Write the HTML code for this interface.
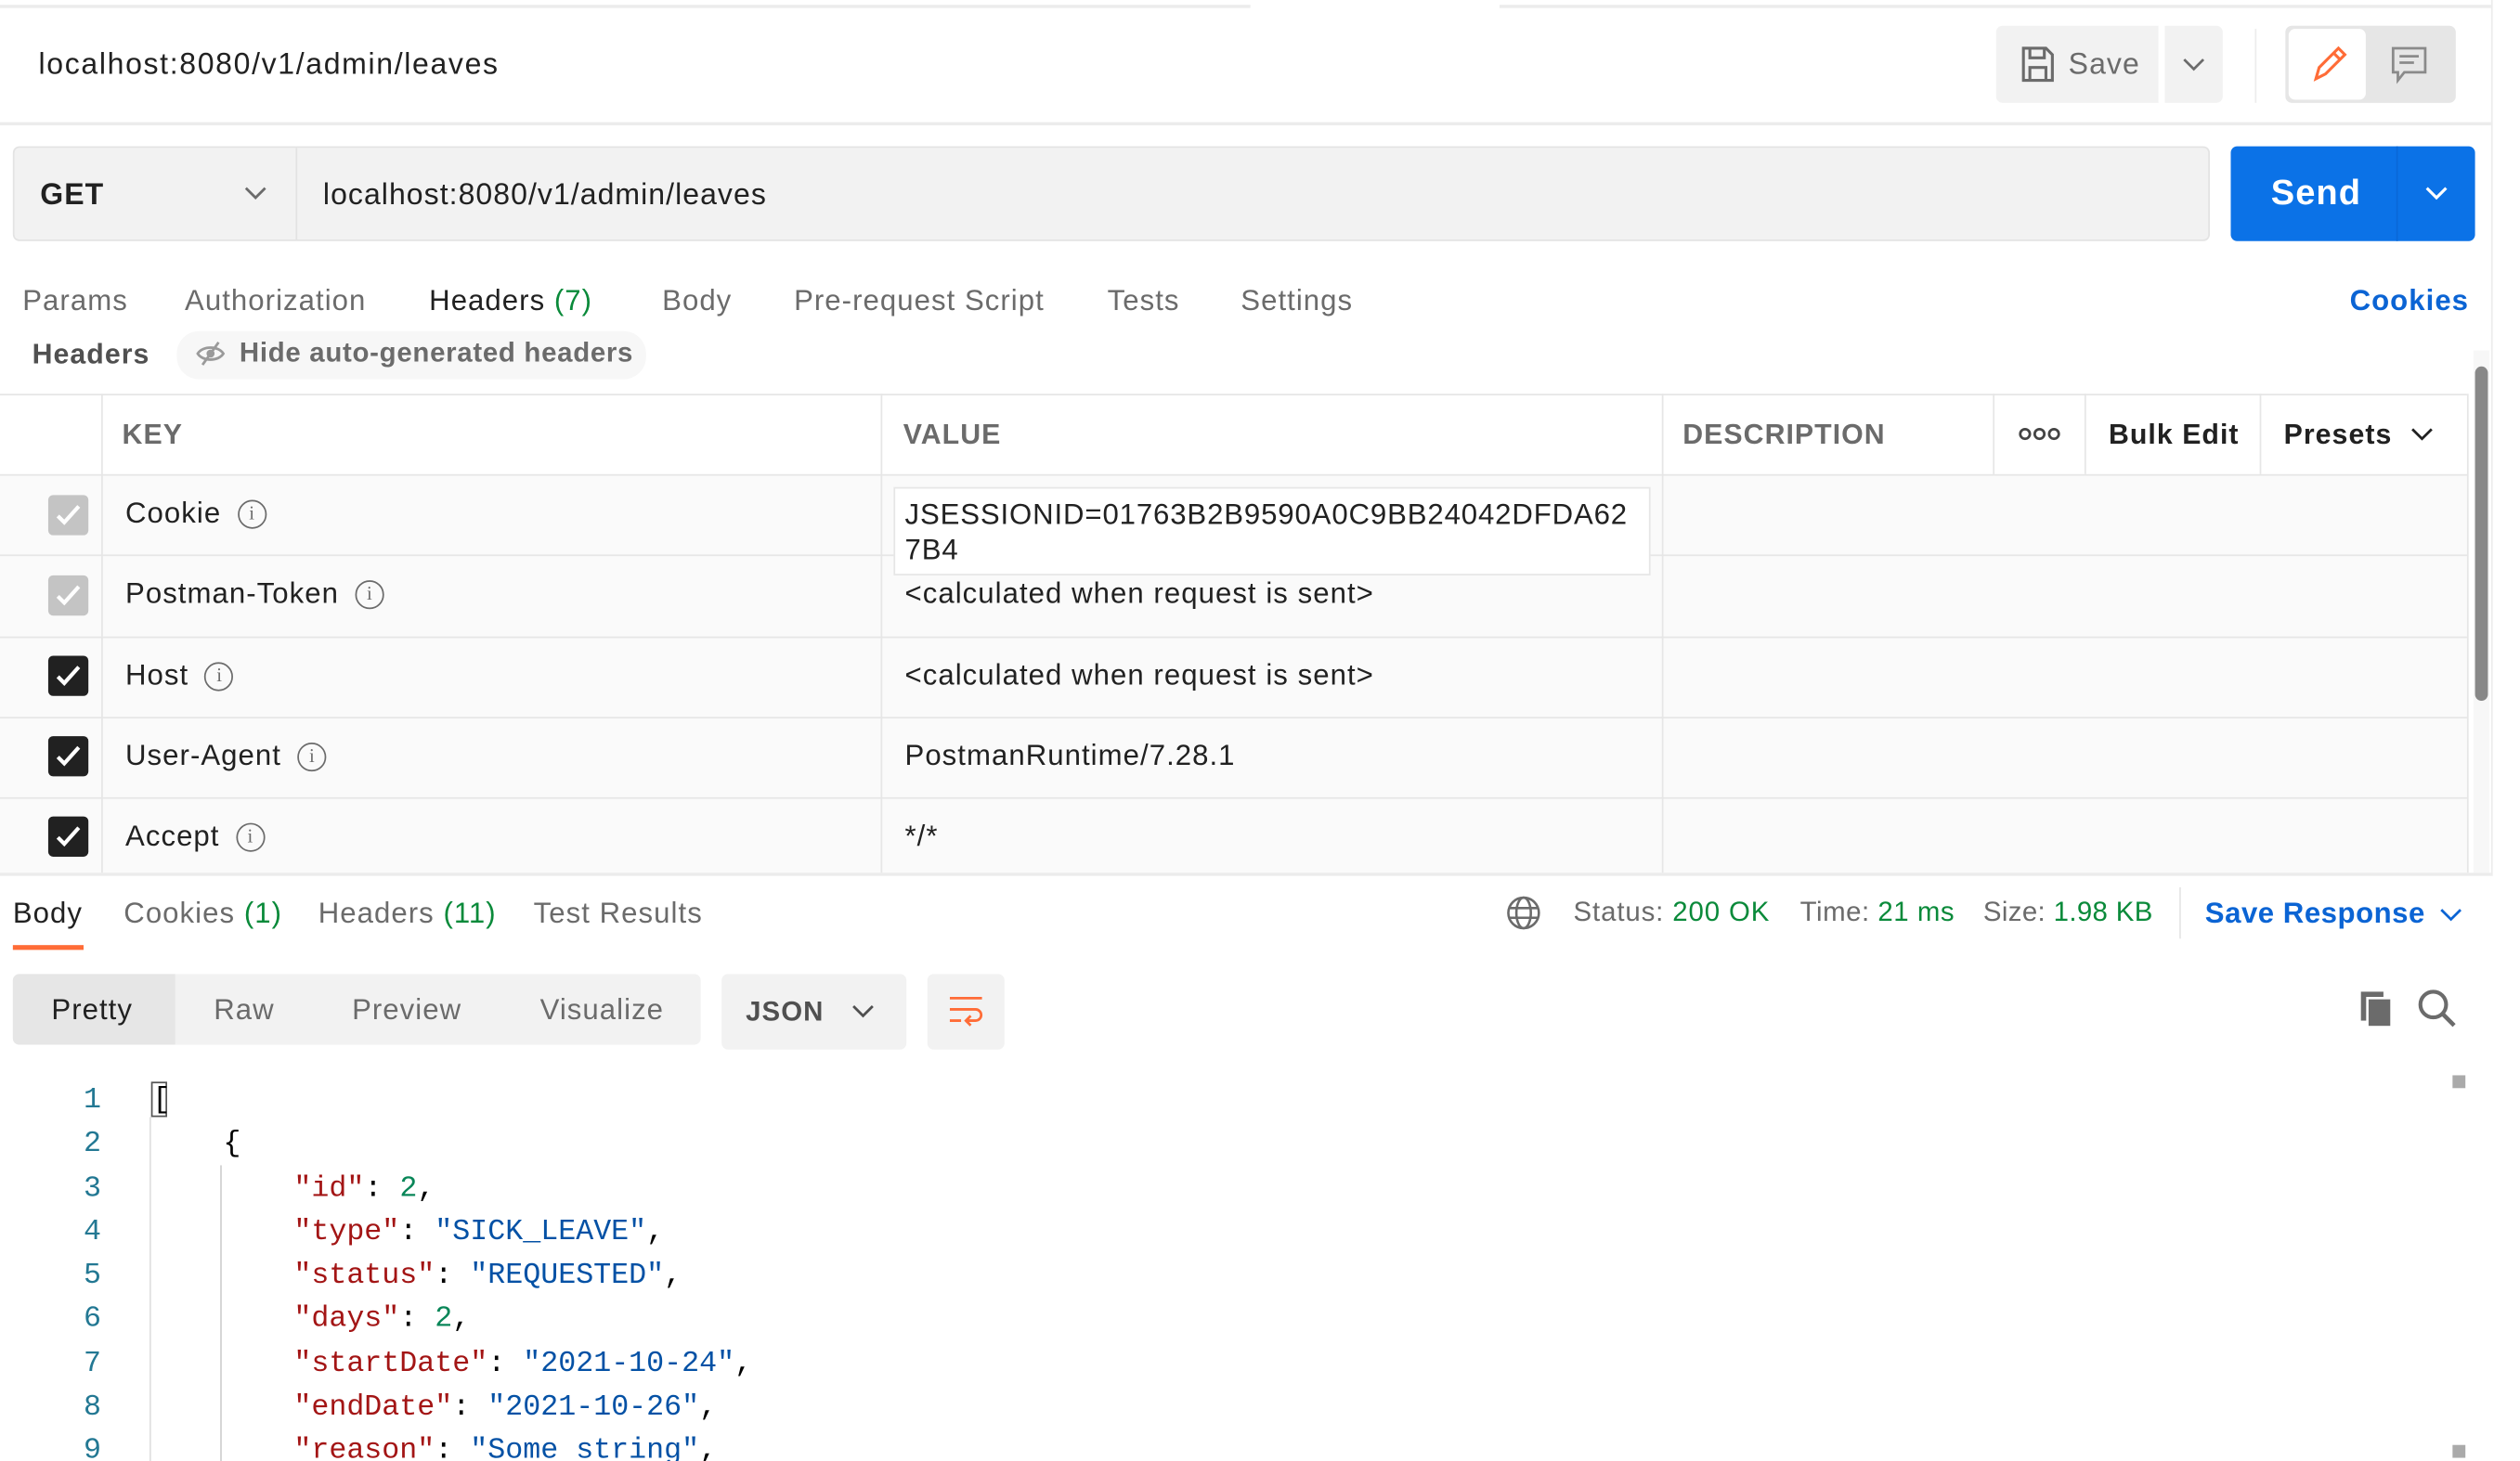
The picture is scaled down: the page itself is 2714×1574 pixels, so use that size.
<!DOCTYPE html>
<html><head><meta charset="utf-8"><style>
*{box-sizing:border-box;margin:0;padding:0}
html,body{width:2714px;height:1574px;overflow:hidden;background:#fff}
#w{width:1568px;height:909px;transform:scale(1.7309,1.7316);transform-origin:0 0;position:relative;font-family:"Liberation Sans",sans-serif;color:#212121}
.a{position:absolute}
.t{font-size:18px;white-space:nowrap;letter-spacing:0.6px}
.g{color:#6b6b6b}
.mono{font-family:"Liberation Mono",monospace;font-size:18.3px;white-space:pre}
.k{color:#a31515}.s{color:#0451a5}.n{color:#098658}
.hl{position:absolute;height:1px;background:#e6e6e6}
.vl{position:absolute;width:1px;background:#e6e6e6}
.cb{position:absolute;left:30px;width:25px;height:25px;border-radius:3px}
.cb.on{background:#212121}.cb.off{background:#c4c4c4}
.cb svg{position:absolute;left:3px;top:3px}
.info{display:inline-block;width:18px;height:18px;border:1.5px solid #6b6b6b;border-radius:50%;font-size:12px;text-align:center;line-height:15px;color:#6b6b6b;margin-left:10px;vertical-align:2px;font-family:"Liberation Serif",serif;letter-spacing:0}
</style></head><body><div id="w">
<div class="hl" style="left:0;top:3px;width:778px;background:#ececec;height:2px"></div>
<div class="hl" style="left:933px;top:3px;width:617px;background:#ececec;height:2px"></div>
<div class="vl" style="left:1550px;top:0;height:545px;background:#ececec"></div>
<div class="a t" style="left:24px;top:29px;font-size:18.5px;color:#212121;letter-spacing:0.95px">localhost:8080/v1/admin/leaves</div>
<div class="a" style="left:1242px;top:16px;width:101px;height:48px;background:#f2f2f2;border-radius:4px 0 0 4px"></div>
<svg class="a" style="left:1257px;top:28px" width="22" height="24" viewBox="0 0 22 24"><path d="M2 2h14l4 4v16H2z M6 2v6h9V2 M6 22v-8h10v8" fill="none" stroke="#6b6b6b" stroke-width="1.8"/></svg>
<div class="a t" style="left:1287px;top:29px;color:#6b6b6b;font-size:18.5px">Save</div>
<div class="a" style="left:1347px;top:16px;width:36px;height:48px;background:#f2f2f2;border-radius:0 4px 4px 0"></div>
<svg class="a" style="left:1357px;top:35px" width="16" height="10"><path d="M2 2l6 6 6-6" fill="none" stroke="#6b6b6b" stroke-width="1.6"/></svg>
<div class="vl" style="left:1403px;top:18px;height:46px;background:#ececec"></div>
<div class="a" style="left:1422px;top:16px;width:106px;height:48px;background:#e6e6e6;border-radius:4px"></div>
<div class="a" style="left:1424px;top:18px;width:48px;height:44px;background:#fff;border-radius:4px"></div>
<svg class="a" style="left:1437px;top:27px" width="24" height="26"><path d="M4 22l2-7L18 3l4 4L10 19z M15 6l4 4" fill="none" stroke="#ff6c37" stroke-width="1.8"/></svg>
<svg class="a" style="left:1487px;top:28px" width="24" height="26"><path d="M2 2h20v15H9l-4 5v-5H2z M6 7h12 M6 11h9" fill="none" stroke="#8a8a8a" stroke-width="1.6"/></svg>
<div class="hl" style="left:0;top:76px;width:1550px;height:2px;background:#ececec"></div>
<div class="a" style="left:8px;top:91px;width:1367px;height:59px;background:#f2f2f2;border:1px solid #e3e3e3;border-radius:4px"></div>
<div class="vl" style="left:184px;top:92px;height:57px;background:#e3e3e3"></div>
<div class="a t" style="left:25px;top:110px;font-weight:bold;font-size:18.5px">GET</div>
<svg class="a" style="left:151px;top:115px" width="16" height="10"><path d="M2 2l6 6 6-6" fill="none" stroke="#6b6b6b" stroke-width="1.6"/></svg>
<div class="a t" style="left:201px;top:110px;font-size:18.5px">localhost:8080/v1/admin/leaves</div>
<div class="a" style="left:1388px;top:91px;width:152px;height:59px;background:#0b72e7;border-radius:4px"></div>
<div class="vl" style="left:1491px;top:91px;height:59px;background:#0a68d8"></div>
<div class="a t" style="left:1413px;top:107px;color:#fff;font-weight:bold;font-size:22px">Send</div>
<svg class="a" style="left:1508px;top:115px" width="16" height="10"><path d="M2 2l6 6 6-6" fill="none" stroke="#fff" stroke-width="1.8"/></svg>
<div class="a t g" style="left:14px;top:177px">Params</div>
<div class="a t g" style="left:115px;top:177px">Authorization</div>
<div class="a t" style="left:267px;top:177px">Headers <span style="color:#0a8a3a">(7)</span></div>
<div class="a" style="left:267px;top:207px;width:109px;height:3px;background:#ff6c37"></div>
<div class="a t g" style="left:412px;top:177px">Body</div>
<div class="a t g" style="left:494px;top:177px">Pre-request Script</div>
<div class="a t g" style="left:689px;top:177px">Tests</div>
<div class="a t g" style="left:772px;top:177px">Settings</div>
<div class="a t" style="left:1462px;top:177px;color:#0b64d4;font-weight:bold">Cookies</div>
<div class="a t" style="left:20px;top:210px;color:#505050;font-weight:bold;font-size:17.5px">Headers</div>
<div class="a" style="left:110px;top:206px;width:292px;height:30px;background:#f7f7f7;border-radius:14px"></div>
<svg class="a" style="left:121px;top:211px" width="20" height="18"><path d="M2 9c3-5 13-5 16 0c-3 5-13 5-16 0z M5 16L15 2" fill="none" stroke="#9a9a9a" stroke-width="1.6"/><circle cx="10" cy="9" r="2.5" fill="#9a9a9a"/></svg>
<div class="a t" style="left:149px;top:210px;color:#6b6b6b;font-weight:bold;font-size:17px;letter-spacing:0.4px">Hide auto-generated headers</div>
<div class="a" style="left:1539px;top:218px;width:10px;height:325px;background:#f7f7f7"></div>
<div class="a" style="left:1540px;top:228px;width:8px;height:208px;background:#888;border-radius:4px"></div>
<div class="a" style="left:0;top:245px;width:1535px;height:298px;background:#fafafa"></div>
<div class="a" style="left:0;top:245px;width:1535px;height:50px;background:#fff"></div>
<div class="hl" style="left:0;top:245px;width:1535px"></div>
<div class="hl" style="left:0;top:295px;width:1535px"></div>
<div class="hl" style="left:0;top:345px;width:1535px"></div>
<div class="hl" style="left:0;top:396px;width:1535px"></div>
<div class="hl" style="left:0;top:446px;width:1535px"></div>
<div class="hl" style="left:0;top:496px;width:1535px"></div>
<div class="vl" style="left:63px;top:245px;height:298px"></div>
<div class="vl" style="left:548px;top:245px;height:298px"></div>
<div class="vl" style="left:1034px;top:245px;height:298px"></div>
<div class="vl" style="left:1240px;top:245px;height:50px"></div>
<div class="vl" style="left:1297px;top:245px;height:50px"></div>
<div class="vl" style="left:1406px;top:245px;height:50px"></div>
<div class="vl" style="left:1535px;top:245px;height:298px"></div>
<div class="a t g" style="left:76px;top:260px;font-weight:bold;font-size:17.5px">KEY</div>
<div class="a t g" style="left:562px;top:260px;font-weight:bold;font-size:17.5px">VALUE</div>
<div class="a t g" style="left:1047px;top:260px;font-weight:bold;font-size:17.5px">DESCRIPTION</div>
<svg class="a" style="left:1256px;top:265px" width="26" height="10"><circle cx="4" cy="5" r="3" fill="none" stroke="#444" stroke-width="1.6"/><circle cx="13" cy="5" r="3" fill="none" stroke="#444" stroke-width="1.6"/><circle cx="22" cy="5" r="3" fill="none" stroke="#444" stroke-width="1.6"/></svg>
<div class="a t" style="left:1312px;top:260px;font-weight:bold;font-size:17.5px;color:#212121">Bulk Edit</div>
<div class="a t" style="left:1421px;top:260px;font-weight:bold;font-size:17.5px;color:#212121">Presets</div>
<svg class="a" style="left:1499px;top:265px" width="16" height="10"><path d="M2 2l6 6 6-6" fill="none" stroke="#212121" stroke-width="1.6"/></svg>
<div class="cb off" style="top:308px"><svg width="19" height="19"><path d="M3 10l4 4 9-10" fill="none" stroke="#fff" stroke-width="2.4"/></svg></div>
<div class="cb off" style="top:358px"><svg width="19" height="19"><path d="M3 10l4 4 9-10" fill="none" stroke="#fff" stroke-width="2.4"/></svg></div>
<div class="cb on" style="top:408px"><svg width="19" height="19"><path d="M3 10l4 4 9-10" fill="none" stroke="#fff" stroke-width="2.4"/></svg></div>
<div class="cb on" style="top:458px"><svg width="19" height="19"><path d="M3 10l4 4 9-10" fill="none" stroke="#fff" stroke-width="2.4"/></svg></div>
<div class="cb on" style="top:508px"><svg width="19" height="19"><path d="M3 10l4 4 9-10" fill="none" stroke="#fff" stroke-width="2.4"/></svg></div>
<div class="a t" style="left:78px;top:309px">Cookie<span class="info">i</span></div>
<div class="a t" style="left:78px;top:359px">Postman-Token<span class="info">i</span></div>
<div class="a t" style="left:78px;top:410px">Host<span class="info">i</span></div>
<div class="a t" style="left:78px;top:460px">User-Agent<span class="info">i</span></div>
<div class="a t" style="left:78px;top:510px">Accept<span class="info">i</span></div>
<div class="a" style="left:556px;top:303px;width:471px;height:55px;background:#fff;border:1px solid #e6e6e6"></div>
<div class="a t" style="left:563px;top:309px;line-height:22px;letter-spacing:0.5px">JSESSIONID=01763B2B9590A0C9BB24042DFDA62<br>7B4</div>
<div class="a t" style="left:563px;top:359px">&lt;calculated when request is sent&gt;</div>
<div class="a t" style="left:563px;top:410px">&lt;calculated when request is sent&gt;</div>
<div class="a t" style="left:563px;top:460px">PostmanRuntime/7.28.1</div>
<div class="a t" style="left:563px;top:510px">*/*</div>
<div class="hl" style="left:0;top:543px;width:1550px;height:2px;background:#ececec"></div>
<div class="a t" style="left:8px;top:558px">Body</div>
<div class="a" style="left:8px;top:588px;width:44px;height:3px;background:#ff6c37"></div>
<div class="a t g" style="left:77px;top:558px">Cookies <span style="color:#0a8a3a">(1)</span></div>
<div class="a t g" style="left:198px;top:558px">Headers <span style="color:#0a8a3a">(11)</span></div>
<div class="a t g" style="left:332px;top:558px">Test Results</div>
<svg class="a" style="left:937px;top:557px" width="22" height="22"><circle cx="11" cy="11" r="9.5" fill="none" stroke="#6b6b6b" stroke-width="1.5"/><ellipse cx="11" cy="11" rx="4.5" ry="9.5" fill="none" stroke="#6b6b6b" stroke-width="1.5"/><path d="M2 8h18M2 14h18" stroke="#6b6b6b" stroke-width="1.5"/></svg>
<div class="a t g" style="left:979px;top:558px;font-size:17px;letter-spacing:0.5px">Status: <span style="color:#0a8a3a">200 OK</span></div>
<div class="a t g" style="left:1120px;top:558px;font-size:17px;letter-spacing:0.3px">Time: <span style="color:#0a8a3a">21 ms</span></div>
<div class="a t g" style="left:1234px;top:558px;font-size:17px;letter-spacing:0.2px">Size: <span style="color:#0a8a3a">1.98 KB</span></div>
<div class="vl" style="left:1356px;top:552px;height:32px;background:#e6e6e6"></div>
<div class="a t" style="left:1372px;top:558px;color:#0b64d4;font-weight:bold;letter-spacing:0.3px">Save Response</div>
<svg class="a" style="left:1517px;top:564px" width="16" height="10"><path d="M2 2l6 6 6-6" fill="none" stroke="#0b64d4" stroke-width="1.6"/></svg>
<div class="a" style="left:8px;top:606px;width:428px;height:44px;background:#f2f2f2;border-radius:4px"></div>
<div class="a" style="left:8px;top:606px;width:101px;height:44px;background:#e6e6e6;border-radius:4px 0 0 4px"></div>
<div class="a t" style="left:32px;top:618px">Pretty</div>
<div class="a t g" style="left:133px;top:618px">Raw</div>
<div class="a t g" style="left:219px;top:618px">Preview</div>
<div class="a t g" style="left:336px;top:618px">Visualize</div>
<div class="a" style="left:449px;top:606px;width:115px;height:47px;background:#f2f2f2;border-radius:4px"></div>
<div class="a t" style="left:464px;top:620px;color:#505050;font-weight:bold;font-size:17px">JSON</div>
<svg class="a" style="left:529px;top:624px" width="16" height="10"><path d="M2 2l6 6 6-6" fill="none" stroke="#505050" stroke-width="1.6"/></svg>
<div class="a" style="left:577px;top:606px;width:48px;height:47px;background:#f2f2f2;border-radius:4px"></div>
<svg class="a" style="left:589px;top:618px" width="24" height="22"><path d="M2 3h20M2 10h16a3.5 3.5 0 0 1 0 7h-5m2-3l-3 3 3 3M2 17h7" fill="none" stroke="#ff6c37" stroke-width="1.6"/></svg>
<svg class="a" style="left:1467px;top:615px" width="26" height="24"><rect x="2" y="2" width="14" height="18" fill="#6b6b6b"/><rect x="6" y="6" width="15" height="18" fill="#6b6b6b" stroke="#fff" stroke-width="1.5"/></svg>
<svg class="a" style="left:1504px;top:615px" width="26" height="26"><circle cx="10" cy="10" r="8" fill="none" stroke="#6b6b6b" stroke-width="2.4"/><path d="M16 16l7 7" stroke="#6b6b6b" stroke-width="2.6"/></svg>
<div class="a mono" style="left:20px;top:672px;width:43px;text-align:right;color:#237893;line-height:27.3px">1
2
3
4
5
6
7
8
9</div>
<div class="a" style="left:94px;top:673px;width:10px;height:22px;border:1px solid #555"></div>
<div class="vl" style="left:137px;top:725px;height:184px;background:#d0d0d0"></div>
<div class="vl" style="left:93px;top:695px;height:214px;background:#e0e0e0"></div>
<div class="a mono" style="left:95px;top:672px;line-height:27.3px;color:#000">[
    {
        <span class="k">"id"</span>: <span class="n">2</span>,
        <span class="k">"type"</span>: <span class="s">"SICK_LEAVE"</span>,
        <span class="k">"status"</span>: <span class="s">"REQUESTED"</span>,
        <span class="k">"days"</span>: <span class="n">2</span>,
        <span class="k">"startDate"</span>: <span class="s">"2021-10-24"</span>,
        <span class="k">"endDate"</span>: <span class="s">"2021-10-26"</span>,
        <span class="k">"reason"</span>: <span class="s">"Some string"</span>,</div>
<div class="a" style="left:1526px;top:669px;width:8px;height:8px;background:#aaa"></div>
<div class="a" style="left:1526px;top:899px;width:8px;height:8px;background:#aaa"></div>
<div class="a" style="left:0;top:909px;width:1568px;height:10px;background:#fff"></div>
</div></body></html>
